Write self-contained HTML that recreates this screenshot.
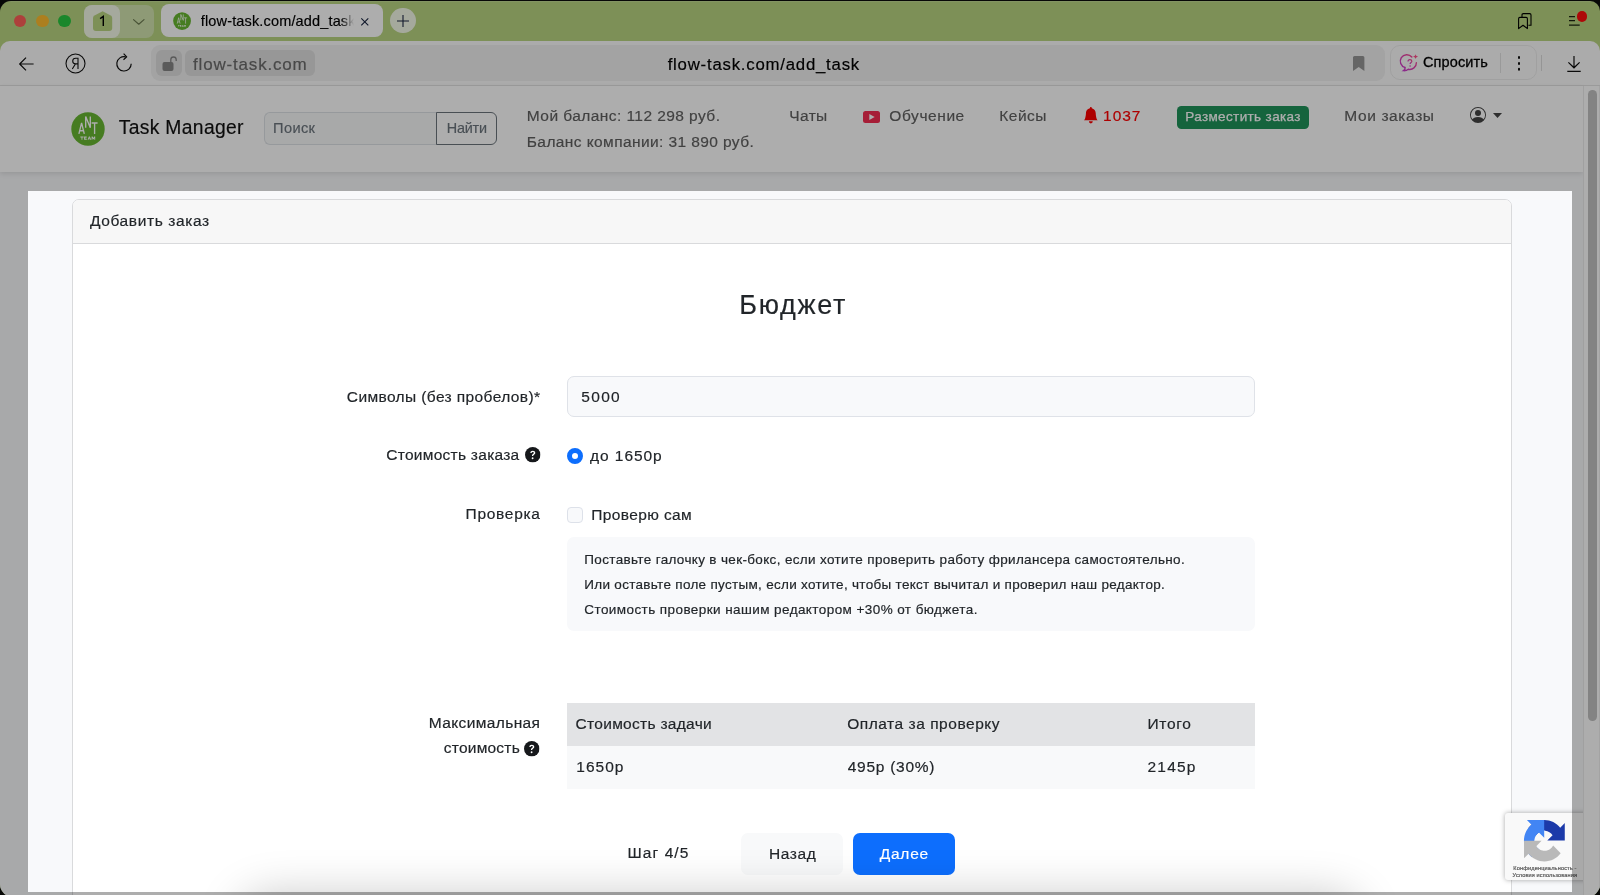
<!DOCTYPE html>
<html lang="ru"><head><meta charset="utf-8"><title>flow-task.com/add_task</title>
<style>
*{box-sizing:border-box}
html,body{margin:0;padding:0}
html{overflow:hidden;height:895px;width:1600px}
body{width:1600px;height:895px;overflow:hidden;position:relative;background:#0b0d0b;font-family:"Liberation Sans",sans-serif;}
.a{position:absolute}
#win{position:absolute;left:0;top:1px;width:1600px;height:895.700px;border-radius:11px 10px 13px 13px;overflow:hidden;background:#b9d480}
#win>*{position:absolute}
.t{position:absolute;white-space:nowrap;line-height:1;-webkit-text-stroke:0.18px currentColor}
#txt{position:absolute;left:0;top:0;width:1600px;height:895px;overflow:hidden;will-change:transform;transform:translateZ(0)}
#dim{position:absolute;left:27.900px;top:191.250px;width:1544.300px;height:700.550px;box-shadow:0 0 0 2000px rgba(0,0,0,.32);pointer-events:none}
svg{position:absolute;overflow:visible}

</style></head><body>
<svg width="0" height="0" style="left:0;top:0"><defs>
<symbol id="ant" viewBox="0 0 34 34"><circle cx="17" cy="17" r="16.7" fill="#68b732"/><g fill="none" stroke="#fff" stroke-width="1.35" stroke-linejoin="miter"><path d="M7.9 21.9 10.6 10.8 13.3 21.9M8.9 18.7h3.4"/><path d="M14.7 15.7V4.6l4.6 11.1V4.6"/><path d="M20.6 11h6M23.6 11v10.9"/></g><path d="M9.3 24.6h3.3v.9h-1.2v2.2h-.9v-2.2H9.3zM13.1 24.6h2.6v.8h-1.7v.4h1.5v.7h-1.5v.4h1.8v.8h-2.7zM17.9 24.6h1l1.3 3.1h-1l-.2-.5h-1.3l-.2.5h-.9zm.1 1.9h.7l-.35-.9zM20.6 24.6h1l.8 1.5.8-1.5h1v3.1h-.9v-1.7l-.7 1.2h-.5l-.7-1.2v1.7h-.8z" fill="#fff"/></symbol>
<symbol id="help" viewBox="0 0 16 16"><circle cx="8" cy="8" r="8" fill="#16181b"/><path d="M5.5 6.1c0-1.4 1.1-2.3 2.5-2.3 1.5 0 2.6.8 2.6 2.1 0 1-.5 1.5-1.3 2-.6.4-.8.7-.8 1.3v.2H7.2v-.3c0-1 .3-1.5 1.100-2 .6-.4.8-.6.8-1.100 0-.5-.4-.9-1.100-.9s-1.100.4-1.200 1z" fill="#fff"/><circle cx="7.85" cy="11.6" r=".95" fill="#fff"/></symbol>
</defs></svg>
<div id="win">
 <!-- tab strip -->
 <div style="left:13.650px;top:13.750px;width:12.700px;height:12.700px;border-radius:50%;background:#ff5f57"></div>
 <div style="left:35.850px;top:13.750px;width:12.700px;height:12.700px;border-radius:50%;background:#febc2e"></div>
 <div style="left:58.050px;top:13.750px;width:12.700px;height:12.700px;border-radius:50%;background:#28c840"></div>
 <div style="left:84.2px;top:3.5px;width:70.3px;height:33.2px;border-radius:8px;background:#d1e4ae"></div>
 <div style="left:84.2px;top:3.5px;width:35.8px;height:33.2px;border-radius:8px;background:#f3f9e8"></div>
 <svg style="left:92.9px;top:10px" width="19.2" height="20" viewBox="0 0 19.2 20"><path d="M9.6 0.3 17.7 4.6Q19.2 5.4 19.2 7V17Q19.2 20 16.2 20H3Q0 20 0 17V7Q0 5.400 1.500 4.600Z" fill="#b9d480"/></svg>
 <svg style="left:99px;top:14px" width="6" height="12" viewBox="0 0 6 12"><path d="M1.100 3.600 4.300 1.300V10.900" fill="none" stroke="#000" stroke-width="1.450" stroke-linejoin="miter"/></svg>
 <svg style="left:132.500px;top:17.600px" width="11.500" height="6" viewBox="0 0 11.500 6"><path d="M.5.600 5.750 5.200 11 .6" fill="none" stroke="#6e7c52" stroke-width="1.200" stroke-linecap="round" stroke-linejoin="round"/></svg>
 <div style="left:161.250px;top:3.400px;width:221.900px;height:33.100px;border-radius:8px;background:#fff"></div>
 <svg style="left:173.150px;top:10.950px" width="18.100" height="18.100"><use href="#ant"/></svg>
 <svg style="left:360.600px;top:16.500px" width="7.600" height="7.600" viewBox="0 0 7.600 7.600"><path d="M.3.300l7 7M7.300.3l-7 7" stroke="#1a2540" stroke-width="1.100" fill="none"/></svg>
 <div style="left:390px;top:6.800px;width:25.600px;height:25.600px;border-radius:50%;background:#f3f9e8"></div>
 <svg style="left:396.800px;top:13.600px" width="12" height="12" viewBox="0 0 12 12"><path d="M0 6h12M6 0v12" stroke="#1a2540" stroke-width="1.100" fill="none"/></svg>
 <svg style="left:1517.500px;top:12px" width="14" height="16.500" viewBox="0 0 14 16.500"><path d="M4 3.900V1.900Q4 .6 5.300.6h6.400Q13 .6 13 1.900v10.400h-2.600" fill="none" stroke="#000" stroke-width="1.100"/><path d="M.6 5.700Q.6 4.400 1.900 4.400h6.200Q9.400 4.400 9.400 5.700V15.600L5 12.200.6 15.600z" fill="none" stroke="#000" stroke-width="1.100" stroke-linejoin="round"/></svg>
 <svg style="left:1569px;top:14.800px" width="11" height="10" viewBox="0 0 11 10"><path d="M0 .6h6M0 4.600h6M0 9.200h10.700" stroke="#1c2412" stroke-width="1.200" fill="none"/></svg>
 <div style="left:1576.900px;top:10.300px;width:10.600px;height:10.600px;border-radius:50%;background:#ff0c0c"></div>
 <div style="left:0;top:0;width:1600px;height:1px;background:rgba(255,255,255,.14)"></div>
 <!-- toolbar -->
 <div style="left:0;top:40px;width:1600px;height:45px;background:#fcfcfc;border-radius:10px 10px 0 0;border-bottom:1px solid #e4e4e4"></div>
 <svg style="left:19.400px;top:55.800px" width="15" height="14" viewBox="0 0 15 14"><path d="M14.600 7H.8M7 .600.700 7 7 13.400" fill="none" stroke="#111" stroke-width="1.200" stroke-linejoin="round"/></svg>
 <svg style="left:65.100px;top:51.500px" width="21" height="21" viewBox="0 0 21 21"><circle cx="10.500" cy="10.500" r="9.500" fill="none" stroke="#111" stroke-width="1.100"/><path d="M13 16V5.200h-2.200C8.900 5.200 7.700 6.300 7.700 8.100c0 1.700 1.100 2.800 2.900 2.800H13M10.400 11 7.300 16" fill="none" stroke="#111" stroke-width="1.100"/></svg>
 <svg style="left:115px;top:52px" width="18" height="20" viewBox="0 0 18 20"><path d="M16.200 10.800A7.200 7.200 0 1 1 10.600 3.800" fill="none" stroke="#111" stroke-width="1.200"/><path d="M8.600.6 11.700 3.800 8.500 6.800" fill="none" stroke="#111" stroke-width="1.200" stroke-linejoin="round"/></svg>
 <div style="left:151.250px;top:44px;width:1234px;height:36px;border-radius:9px;background:#f0f0f0"></div>
 <div style="left:156.250px;top:49.250px;width:25.650px;height:26px;border-radius:6px;background:#dfdfdf"></div>
 <div style="left:184.750px;top:49.250px;width:130.500px;height:26px;border-radius:6px;background:#dfdfdf"></div>
 <svg style="left:161.500px;top:53.500px" width="16" height="17" viewBox="0 0 16 17"><rect x=".5" y="7" width="11" height="9" rx="2" fill="#858585"/><path d="M8.800 7.200V4.700a2.700 2.700 0 0 1 5.400 0V6" fill="none" stroke="#858585" stroke-width="1.300"/></svg>
 <svg style="left:1353.300px;top:54.500px" width="11.400" height="15" viewBox="0 0 11.400 15"><path d="M0 1.500Q0 0 1.500 0h8.400q1.500 0 1.500 1.500V15L5.700 11 0 15z" fill="#969696"/></svg>
 <div style="left:1390.200px;top:44.400px;width:146.500px;height:35.100px;border-radius:10px;background:#fdfdfd;border:1px solid #ececec"></div>
 <svg style="left:1402.300px;top:53.300px" width="17.300" height="18.200" viewBox="0 0 19 20"><defs><linearGradient id="pg" x1="0" y1="1" x2="1" y2="0"><stop offset="0" stop-color="#c43ad6"/><stop offset="1" stop-color="#ff4f8a"/></linearGradient></defs><path d="M10.800 3.300A7.200 7.200 0 1 0 3.400 14.900C3.500 16.400 2.800 17.600 1.800 18.300 4 18.400 5.700 17.800 6.900 16.700A7.200 7.200 0 0 0 15.800 9.500" fill="none" stroke="url(#pg)" stroke-width="1.600" stroke-linecap="round"/><path d="M14.900 0c.2 1.900.9 2.600 2.900 2.900-2 .3-2.700 1-2.900 2.900-.2-1.900-.9-2.600-2.900-2.900 2-.3 2.700-1 2.900-2.900z" fill="#ff4f8a"/><path d="M6.600 8.300c0-1.300.9-2.100 2.100-2.100s2.100.7 2.100 1.800c0 .9-.5 1.300-1.100 1.700-.5.400-.8.700-.8 1.400" fill="none" stroke="url(#pg)" stroke-width="1.300"/><circle cx="8.900" cy="13.200" r=".9" fill="#d940b8"/></svg>
 <div style="left:1500px;top:52px;width:1px;height:20px;background:#e2e2e2"></div>
 <div style="left:1518px;top:55.400px;width:2.200px;height:2.200px;border-radius:50%;background:#111;box-shadow:0 5.900px 0 #111,0 11.800px 0 #111"></div>
 <div style="left:1541px;top:54px;width:1px;height:16px;background:#dcdcdc"></div>
 <svg style="left:1566.500px;top:54.800px" width="14" height="16" viewBox="0 0 14 16"><path d="M7 0v11.600M1.400 6.400 7 11.800l5.600-5.400M.3 15.300h13.400" fill="none" stroke="#111" stroke-width="1.200"/></svg>
 <!-- page -->
 <div style="left:0;top:85px;width:1583px;height:812px;background:#f8f9fb"></div>
 <!-- card -->
 <div style="left:72px;top:198px;width:1440px;height:720px;background:#fff;border:1px solid #d9dadc;border-radius:7px"></div>
 <div style="left:73px;top:199px;width:1438px;height:44px;background:#f7f7f7;border-bottom:1px solid #d9dadc;border-radius:6px 6px 0 0"></div>
 <!-- form -->
 <div style="left:566.750px;top:375px;width:687.750px;height:41px;background:#f8f9fb;border:1px solid #dfe2e8;border-radius:7px"></div>
 <svg style="left:524.750px;top:445.750px" width="15.500" height="15.500"><use href="#help"/></svg>
 <div style="left:566.500px;top:447.250px;width:16px;height:16px;border-radius:50%;background:#fff;border:5px solid #0d6efd"></div>
 <div style="left:566.750px;top:506px;width:16.250px;height:16px;border-radius:4px;background:#f8f9fb;border:1px solid #dde1e9"></div>
 <div style="left:566.750px;top:536.200px;width:687.750px;height:94px;border-radius:7px;background:#f8f9fb"></div>
 <svg style="left:524.250px;top:739.500px" width="15.500" height="15.500"><use href="#help"/></svg>
 <div style="left:566.750px;top:701.500px;width:687.750px;height:43.250px;background:#e2e3e5"></div>
 <div style="left:566.750px;top:744.750px;width:687.750px;height:43px;background:#f8f9fa"></div>
 <div style="left:741px;top:832.400px;width:102px;height:41.200px;border-radius:7px;background:#f8f9fa"></div>
 <div style="left:853px;top:832.400px;width:102px;height:41.200px;border-radius:7px;background:#0d6efd"></div>
 <!-- bottom soft shadow -->
 <div style="left:250px;top:904px;width:1100px;height:50px;border-radius:20px;box-shadow:0 0 45px 10px rgba(0,0,0,.22)"></div>
 <!-- recaptcha -->
 <div style="left:1504.500px;top:811.900px;width:90px;height:66.900px;background:#f9f9f9;border-radius:3px 0 0 3px;box-shadow:0 0 5px rgba(0,0,0,.35)"></div>
 <svg style="left:1524px;top:819.300px" width="40.800" height="41.400" viewBox="0 0 64 64" preserveAspectRatio="none"><path d="M64 31.960c-.002-.46-.013-.917-.033-1.373V4.680l-7.180 7.180C50.900 4.630 41.980 0 31.980 0 21.580 0 12.340 4.960 6.500 12.650l11.770 11.890a15.640 15.640 0 0 1 4.770-5.350c2.060-1.600 4.960-2.920 8.940-2.920.48 0 .85.060 1.130.16 4.930.39 9.200 3.110 11.720 7.060l-8.330 8.330c10.550-.04 22.470-.07 27.500.01" fill="#1c3aa9"/><path d="M31.860 0c-.46.002-.917.013-1.373.033H4.580l7.180 7.180C4.530 13.100-.1 22.020-.1 32.020c0 10.400 4.960 19.640 12.650 25.480l11.890-11.770a15.640 15.640 0 0 1-5.350-4.770c-1.600-2.060-2.920-4.960-2.920-8.940 0-.48.060-.85.160-1.130.39-4.930 3.110-9.200 7.060-11.720l8.330 8.330c-.04-10.550-.07-22.470.01-27.500" fill="#4285f4"/><path d="M.001 32.040c.2.460.13.917.033 1.373v25.910l7.180-7.180C13.100 59.370 22.020 64 32.020 64c10.400 0 19.640-4.960 25.480-12.650L45.730 39.460a15.640 15.640 0 0 1-4.770 5.350c-2.060 1.600-4.960 2.920-8.940 2.920-.48 0-.85-.06-1.130-.16-4.930-.39-9.200-3.110-11.720-7.060l8.330-8.330c-10.550.04-22.470.07-27.500-.01" fill="#b9b9b9"/></svg>
 <!-- site header -->
 <div style="left:0;top:85px;width:1583px;height:86px;background:#fff;box-shadow:0 2px 5px rgba(0,0,0,.105)"></div>
 <svg style="left:71.350px;top:111.100px" width="34" height="34"><use href="#ant"/></svg>
 <div style="left:263.500px;top:111px;width:173px;height:33px;background:#f8f9fa;border:1px solid #dee2e6;border-right:0;border-radius:6px 0 0 6px"></div>
 <div style="left:436px;top:111px;width:61px;height:33px;border:1px solid #6c757d;border-radius:0 6px 6px 0"></div>
 <svg style="left:862.500px;top:110px" width="17" height="12" viewBox="0 0 17 12"><rect width="17" height="12" rx="2.500" fill="#f52d52"/><path d="M6.300 2.900v6.200L11.700 6z" fill="#fff"/></svg>
 <svg style="left:1083px;top:105.900px" width="15.700" height="16.400" viewBox="0 0 16 16" preserveAspectRatio="none"><path d="M8 16a2 2 0 0 0 2-2H6a2 2 0 0 0 2 2zm.995-14.901a1 1 0 1 0-1.990 0A5.002 5.002 0 0 0 3 6c0 1.098-.5 6-2 7h14c-1.500-1-2-5.902-2-7 0-2.420-1.720-4.440-4.005-4.901z" fill="#ff0000"/></svg>
 <div style="left:1176.750px;top:104.500px;width:132px;height:23px;border-radius:4.500px;background:#1f945b"></div>
 <svg style="left:1469.700px;top:106px" width="16" height="16" viewBox="0 0 16 16"><path d="M11 6a3 3 0 1 1-6 0 3 3 0 0 1 6 0z" fill="#444"/><path fill-rule="evenodd" d="M0 8a8 8 0 1 1 16 0A8 8 0 0 1 0 8zm8-7a7 7 0 0 0-5.468 11.370C3.242 11.226 4.805 10 8 10s4.757 1.225 5.468 2.370A7 7 0 0 0 8 1z" fill="#444"/></svg>
 <svg style="left:1493px;top:112px" width="9" height="5" viewBox="0 0 9 5"><path d="M0 0h9L4.500 5z" fill="#444"/></svg>
 <!-- scrollbar -->
 <div style="left:1583px;top:85px;width:17px;height:812px;background:#fff;border-left:1px solid #ececec;border-right:1px solid #f1f1f1"></div>
 <div style="left:1588px;top:89px;width:9px;height:631px;border-radius:5px;background:#c1c1c1"></div>
</div>

<div id="txt">
<span class="t" style="left:200.80px;top:13.73px;font-size:14.5px;color:#000;letter-spacing:0.152px;-webkit-mask-image:linear-gradient(90deg,#000 0,#000 140px,transparent 153px);mask-image:linear-gradient(90deg,#000 0,#000 140px,transparent 153px);padding-bottom:5px;">flow-task.com/add_task</span>
<span class="t" style="left:193.05px;top:55.81px;font-size:17px;color:#6a6a6a;letter-spacing:0.815px;">flow-task.com</span>
<span class="t" style="left:667.70px;top:56.88px;font-size:16.8px;color:#000;letter-spacing:0.769px;">flow-task.com/add_task</span>
<span class="t" style="left:1423.00px;top:55.23px;font-size:14.5px;color:#000;letter-spacing:0.114px;-webkit-text-stroke:0.3px #000;">Спросить</span>
<span class="t" style="left:118.70px;top:117.66px;font-size:19.3px;color:#111;letter-spacing:0.336px;">Task Manager</span>
<span class="t" style="left:273.05px;top:121.14px;font-size:14.6px;color:#6c757d;letter-spacing:0.374px;">Поиск</span>
<span class="t" style="left:446.80px;top:121.31px;font-size:14.4px;color:#6c757d;letter-spacing:-0.220px;">Найти</span>
<span class="t" style="left:526.80px;top:107.63px;font-size:15.5px;color:#606060;letter-spacing:0.437px;">Мой баланс: 112 298 руб.</span>
<span class="t" style="left:526.80px;top:133.63px;font-size:15.5px;color:#606060;letter-spacing:0.403px;">Баланс компании: 31 890 руб.</span>
<span class="t" style="left:789.30px;top:107.63px;font-size:15.5px;color:#606060;letter-spacing:0.364px;">Чаты</span>
<span class="t" style="left:889.30px;top:107.63px;font-size:15.5px;color:#606060;letter-spacing:0.580px;">Обучение</span>
<span class="t" style="left:999.30px;top:107.63px;font-size:15.5px;color:#606060;letter-spacing:0.499px;">Кейсы</span>
<span class="t" style="left:1103.05px;top:107.63px;font-size:15.5px;color:#ff0000;letter-spacing:0.989px;">1037</span>
<span class="t" style="left:1185.30px;top:110.07px;font-size:13.5px;color:#fff;letter-spacing:0.361px;-webkit-text-stroke:0.25px #fff;">Разместить заказ</span>
<span class="t" style="left:1344.30px;top:107.63px;font-size:15.5px;color:#606060;letter-spacing:0.609px;">Мои заказы</span>
<span class="t" style="left:89.90px;top:212.88px;font-size:15.5px;color:#212529;letter-spacing:0.625px;">Добавить заказ</span>
<span class="t" style="left:739.30px;top:292.04px;font-size:27px;color:#212529;letter-spacing:1.703px;">Бюджет</span>
<span class="t" style="left:346.80px;top:388.63px;font-size:15.5px;color:#212529;letter-spacing:0.390px;">Символы (без пробелов)*</span>
<span class="t" style="left:581.30px;top:388.63px;font-size:15.5px;color:#212529;letter-spacing:1.322px;">5000</span>
<span class="t" style="left:386.30px;top:447.38px;font-size:15.5px;color:#212529;letter-spacing:0.267px;">Стоимость заказа</span>
<span class="t" style="left:590.05px;top:448.13px;font-size:15.5px;color:#212529;letter-spacing:0.946px;">до 1650р</span>
<span class="t" style="left:465.55px;top:506.13px;font-size:15.5px;color:#212529;letter-spacing:0.716px;">Проверка</span>
<span class="t" style="left:591.30px;top:506.88px;font-size:15.5px;color:#212529;letter-spacing:0.381px;">Проверю сам</span>
<span class="t" style="left:584.30px;top:552.87px;font-size:13.5px;color:#212529;letter-spacing:0.342px;">Поставьте галочку в чек-бокс, если хотите проверить работу фрилансера самостоятельно.</span>
<span class="t" style="left:584.30px;top:577.87px;font-size:13.5px;color:#212529;letter-spacing:0.298px;">Или оставьте поле пустым, если хотите, чтобы текст вычитал и проверил наш редактор.</span>
<span class="t" style="left:584.30px;top:603.37px;font-size:13.5px;color:#212529;letter-spacing:0.421px;">Стоимость проверки нашим редактором +30% от бюджета.</span>
<span class="t" style="left:428.80px;top:715.13px;font-size:15.5px;color:#212529;letter-spacing:0.378px;">Максимальная</span>
<span class="t" style="left:443.80px;top:740.13px;font-size:15.5px;color:#212529;letter-spacing:0.224px;">стоимость</span>
<span class="t" style="left:575.55px;top:715.63px;font-size:15.5px;color:#212529;letter-spacing:0.300px;">Стоимость задачи</span>
<span class="t" style="left:847.20px;top:715.63px;font-size:15.5px;color:#212529;letter-spacing:0.535px;">Оплата за проверку</span>
<span class="t" style="left:1147.50px;top:715.63px;font-size:15.5px;color:#212529;letter-spacing:0.669px;">Итого</span>
<span class="t" style="left:576.30px;top:758.63px;font-size:15.5px;color:#212529;letter-spacing:1.023px;">1650р</span>
<span class="t" style="left:847.70px;top:758.63px;font-size:15.5px;color:#212529;letter-spacing:0.740px;">495р (30%)</span>
<span class="t" style="left:1147.50px;top:758.63px;font-size:15.5px;color:#212529;letter-spacing:1.223px;">2145р</span>
<span class="t" style="left:627.50px;top:845.38px;font-size:15.5px;color:#212529;letter-spacing:1.093px;">Шаг 4/5</span>
<span class="t" style="left:768.90px;top:845.88px;font-size:15.5px;color:#212529;letter-spacing:0.595px;">Назад</span>
<span class="t" style="left:879.70px;top:845.88px;font-size:15.5px;color:#fff;letter-spacing:0.773px;">Далее</span>
<span class="t" style="left:1513.30px;top:865.86px;font-size:5.6px;color:#555;letter-spacing:0.159px;">Конфиденциальность -</span>
<span class="t" style="left:1512.60px;top:872.66px;font-size:5.6px;color:#555;letter-spacing:0.115px;">Условия использования</span>
</div>
<div id="dim"></div>
</body></html>
